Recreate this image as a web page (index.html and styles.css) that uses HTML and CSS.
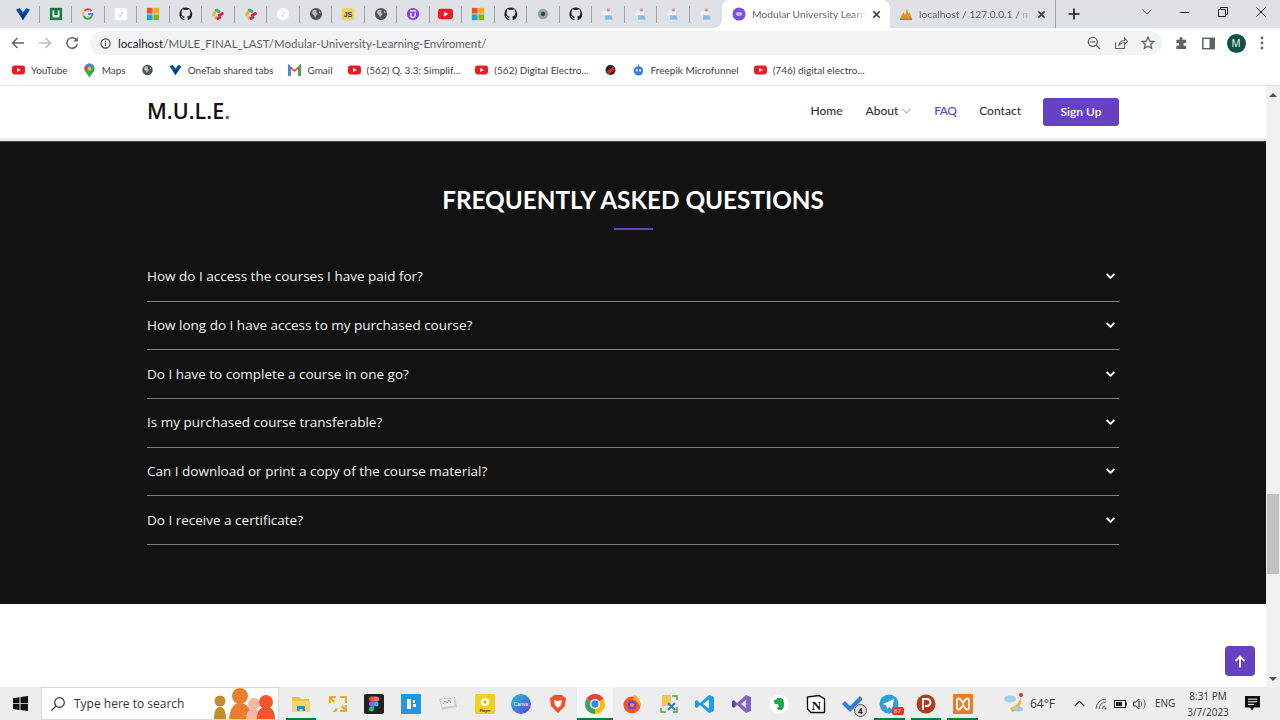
FILE: index.html
```html
<!DOCTYPE html>
<html lang="en">
<head>
<meta charset="utf-8">
<title>Modular University Learning Enviroment</title>
<link rel="stylesheet" href="styles.css">
</head>
<body>
<svg class="defs" width="0" height="0" aria-hidden="true">
  <symbol id="i-onetab" viewBox="0 0 16 16"><path d="M0 3 4 1l4 5 4-5 4 2-8 12z" fill="#0f4fa8"/><path d="M5 6l3 3 3-3-3 9z" fill="#0a2f73"/></symbol>
  <symbol id="i-ms" viewBox="0 0 16 16"><rect x="1" y="1" width="6.5" height="6.5" fill="#f25022"/><rect x="8.5" y="1" width="6.5" height="6.5" fill="#f2a81d"/><rect x="1" y="8.5" width="6.5" height="6.5" fill="#1fa3e0"/><rect x="8.5" y="8.5" width="6.5" height="6.5" fill="#7fba00"/></symbol>
  <symbol id="i-gh" viewBox="0 0 16 16"><path fill="#1b1f23" d="M8 .6a7.500 7.500 0 0 0-2.400 14.600c.4.100.5-.2.5-.4v-1.300c-2.100.4-2.600-.9-2.800-1.400-.1-.2-.5-.9-.8-1.100-.3-.2-.7-.5 0-.6.700 0 1.100.6 1.300.9.700 1.200 2 .9 2.300.7.100-.5.3-.9.5-1.100-1.800-.2-3.800-.9-3.800-4 0-.9.3-1.600.8-2.200-.1-.2-.3-1 .1-2.100 0 0 .7-.2 2.200.8a7.400 7.400 0 0 1 4 0c1.500-1 2.200-.8 2.200-.8.400 1.100.2 1.900.1 2.100.5.600.8 1.300.8 2.200 0 3.100-1.900 3.800-3.700 4 .3.300.6.800.6 1.500v2.200c0 .2.100.5.500.4A7.500 7.500 0 0 0 8 .6z"/></symbol>
  <symbol id="i-slack" viewBox="0 0 16 16"><g stroke-width="3.400" stroke-linecap="round" fill="none"><path d="M6 3.500 9 5" stroke="#2fb67c"/><path d="M3 9 4.500 6" stroke="#ecb22e"/><path d="M5.500 12.500 6 12" stroke="#ecb22e"/><path d="M9.500 9.500 13 7.500" stroke="#e01e5a"/><path d="M8 13 10 12" stroke="#e01e5a"/></g></symbol>
  <symbol id="i-globe" viewBox="0 0 16 16"><circle cx="8" cy="8" r="7" fill="#50555a"/><path d="M4 4l3-1 2 1-1 2 2 1.500-1.500 2L7 12 5.500 9 3.500 7.500zM11.500 4l2 2.500-2 .5z" fill="#b8bbbf"/></symbol>
  <symbol id="i-yt" viewBox="0 0 16 12"><rect x="0" y="0.500" width="16" height="11" rx="3" fill="#ed1c24"/><path d="M6.300 3.400v5.200L11 6z" fill="#fff"/></symbol>
  <symbol id="i-flask" viewBox="0 0 16 16"><path d="M1 6c2-2 4-2 5-1l1 3-5 1z" fill="#e8f1f7"/><path d="M6 4h5v3l2.500 7.500h-9L6 7z" fill="#eef5fa"/><path d="M5 9.500h7l1.500 5h-9z" fill="#7fbde8"/><circle cx="8.500" cy="3.500" r="2" fill="#ee8a7c"/></symbol>
  <symbol id="i-x" viewBox="0 0 10 10"><path d="M1.500 1.500l7 7m0-7l-7 7" stroke="#3c4043" stroke-width="1.700" fill="none"/></symbol>
  <symbol id="i-chev" viewBox="0 0 12 8"><path d="M1.800 1.800 6 6l4.200-4.200" fill="none" stroke="#fff" stroke-width="2"/></symbol>
</svg>

<div class="tabstrip">
  <div class="pinned">
    <div class="ptab"><svg class="pi"><use href="#i-onetab"/></svg></div>
    <div class="ptab"><svg class="pi" viewBox="0 0 16 16"><rect x="1" y="1" width="14" height="14" fill="#1e7a46"/><path d="M4 4h2v5h4V4h2v8H4z" fill="#dcefe4"/></svg></div>
    <div class="ptab"><svg class="pi" viewBox="0 0 16 16"><path d="M4 4.500A5 5 0 0 1 12 4.600" fill="none" stroke="#ea4335" stroke-width="2.400"/><path d="M3.200 10.500A5 5 0 0 1 3.200 5.500" fill="none" stroke="#fbbc05" stroke-width="2.400"/><path d="M3.200 10.500A5 5 0 0 0 12 11" fill="none" stroke="#34a853" stroke-width="2.400"/><path d="M8 8h5.500M13 8c0 1-.4 2-1 3" fill="none" stroke="#4285f4" stroke-width="2.200"/></svg></div>
    <div class="ptab"><svg class="pi" viewBox="0 0 16 16"><rect x="1" y="1" width="14" height="14" rx="2" fill="#fff"/><circle cx="9" cy="7" r="1" fill="#8fb8c9"/><circle cx="7" cy="10" r="1" fill="#8fb8c9"/></svg></div>
    <div class="ptab"><svg class="pi"><use href="#i-ms"/></svg></div>
    <div class="ptab"><svg class="pi"><use href="#i-gh"/></svg></div>
    <div class="ptab"><svg class="pi"><use href="#i-slack"/></svg></div>
    <div class="ptab"><svg class="pi"><use href="#i-slack"/></svg></div>
    <div class="ptab"><svg class="pi" viewBox="0 0 16 16"><circle cx="8" cy="8" r="7" fill="#fff"/><circle cx="9" cy="7" r="1" fill="#a9c4d4"/><circle cx="7" cy="10" r="1" fill="#a9c4d4"/></svg></div>
    <div class="ptab"><svg class="pi"><use href="#i-globe"/></svg></div>
    <div class="ptab"><svg class="pi" viewBox="0 0 16 16"><rect x="1" y="1" width="14" height="14" rx="2" fill="#f0d74e"/><text x="8" y="11.500" class="js">JS</text></svg></div>
    <div class="ptab"><svg class="pi"><use href="#i-globe"/></svg></div>
    <div class="ptab"><svg class="pi" viewBox="0 0 16 16"><circle cx="8" cy="8" r="7" fill="#8a3fd6"/><path d="M5.500 6.500v3a2.500 2.500 0 0 0 5 0v-3M4.500 4.500h7" fill="none" stroke="#fff" stroke-width="1.500"/></svg></div>
    <div class="ptab"><svg class="pi wide"><use href="#i-yt"/></svg></div>
    <div class="ptab"><svg class="pi"><use href="#i-ms"/></svg></div>
    <div class="ptab"><svg class="pi"><use href="#i-gh"/></svg></div>
    <div class="ptab"><svg class="pi" viewBox="0 0 16 16"><circle cx="8" cy="8" r="6" fill="#9aa69b"/><circle cx="8" cy="8" r="2.500" fill="#1d5b38"/></svg></div>
    <div class="ptab"><svg class="pi"><use href="#i-gh"/></svg></div>
    <div class="ptab"><svg class="pi"><use href="#i-flask"/></svg></div>
    <div class="ptab"><svg class="pi"><use href="#i-flask"/></svg></div>
    <div class="ptab"><svg class="pi"><use href="#i-flask"/></svg></div>
    <div class="ptab last"><svg class="pi"><use href="#i-flask"/></svg></div>
  </div>
  <div class="tab active">
    <svg class="pi" viewBox="0 0 16 16"><circle cx="8" cy="8" r="7.500" fill="#7a4fe0"/><path d="M4 8c1-3 7-3 8 0-1 3-7 3-8 0z" fill="#c8b4f5"/></svg>
    <span class="tabtitle">Modular University Learni</span>
    <svg class="tabx"><use href="#i-x"/></svg>
  </div>
  <div class="tab second">
    <svg class="pi" viewBox="0 0 16 16"><path d="M1 14 5 6l2 3 2-7 2 6 1-2 3 8z" fill="#f29111"/><path d="M1 14h14" stroke="#6c78af" stroke-width="1.500"/></svg>
    <span class="tabtitle">localhost / 127.0.0.1 / mu</span>
    <svg class="tabx"><use href="#i-x"/></svg>
  </div>
  <div class="newtab">
    <svg width="12" height="12" viewBox="0 0 12 12"><path d="M6 .5v11M.5 6h11" stroke="#202124" stroke-width="1.700"/></svg>
  </div>
  <div class="winctl">
    <svg width="10" height="6" viewBox="0 0 10 6"><path d="M.5.500 5 5 9.500.500" fill="none" stroke="#555" /></svg>
    <svg class="wbtn" width="10" height="10" viewBox="0 0 10 10"><path d="M0 5.500h9" stroke="#222"/></svg>
    <svg class="wbtn" width="10" height="10" viewBox="0 0 10 10"><path d="M.5 2.500h7v7h-7zM2.500 2.500v-2h7v7h-2" fill="none" stroke="#222"/></svg>
    <svg class="wbtn" width="10" height="10" viewBox="0 0 10 10"><path d="M.5.500l9 9m0-9l-9 9" stroke="#222"/></svg>
  </div>
</div>

<div class="toolbar">
  <svg class="nav-ic" width="14" height="12" viewBox="0 0 14 12"><path d="M13 6H2M6.500 1 1.500 6l5 5" fill="none" stroke="#5f6368" stroke-width="1.500"/></svg>
  <svg class="nav-ic" width="14" height="12" viewBox="0 0 14 12"><path d="M1 6h11M7.500 1l5 5-5 5" fill="none" stroke="#b9bcc0" stroke-width="1.500"/></svg>
  <svg class="nav-ic" width="14" height="14" viewBox="0 0 14 14"><path d="M11.800 4.500A5.300 5.300 0 1 0 12.300 8" fill="none" stroke="#5f6368" stroke-width="1.500"/><path d="M12.800 1v4.500H8.300z" fill="#5f6368"/></svg>
  <div class="omnibox">
    <svg width="11" height="11" viewBox="0 0 12 12"><circle cx="6" cy="6" r="5" fill="none" stroke="#444" stroke-width="1.200"/><path d="M6 5.200v3.600M6 3v1.200" stroke="#444" stroke-width="1.200"/></svg>
    <span class="url"><b>localhost</b>/MULE_FINAL_LAST/Modular-University-Learning-Enviroment/</span>
    <span class="omni-right">
      <svg width="14" height="14" viewBox="0 0 14 14"><circle cx="5.800" cy="5.800" r="4.500" fill="none" stroke="#5f6368" stroke-width="1.300"/><path d="M9 9l4 4M3.500 5.800h4.600" stroke="#5f6368" stroke-width="1.300"/></svg>
      <svg width="14" height="14" viewBox="0 0 14 14"><path d="M1.500 6.500v6h9v-3M5 9c.5-3 2.500-4.500 5.500-4.500V2l3 3.500-3 3V6.500C8 6.500 6.500 7.500 5 9z" fill="none" stroke="#5f6368" stroke-width="1.100"/></svg>
      <svg width="14" height="14" viewBox="0 0 14 14"><path d="M7 1.300 8.700 5.100l4.100.4-3.100 2.700.9 4.100L7 10.200l-3.600 2.100.9-4.100L1.200 5.500l4.100-.4z" fill="none" stroke="#5f6368" stroke-width="1.300"/></svg>
    </span>
  </div>
  <div class="tool-right">
    <svg width="13" height="13" viewBox="0 0 14 14"><path d="M5 1.500a1.500 1.500 0 0 1 3 0V3h4v3.500h-1.500a1.500 1.500 0 0 0 0 3H12V13H1.500V9.500H3a1.500 1.500 0 0 0 0-3H1.500V3H5z" fill="#5f6368"/></svg>
    <svg width="13" height="13" viewBox="0 0 13 13"><rect x=".8" y="1.300" width="11.400" height="10.400" fill="none" stroke="#5f6368" stroke-width="1.500"/><rect x="7.500" y="1.300" width="4.700" height="10.400" fill="#5f6368"/></svg>
    <span class="avatar">M</span>
    <svg width="4" height="14" viewBox="0 0 4 14"><circle cx="2" cy="2" r="1.400" fill="#5f6368"/><circle cx="2" cy="7" r="1.400" fill="#5f6368"/><circle cx="2" cy="12" r="1.400" fill="#5f6368"/></svg>
  </div>
</div>

<div class="bookmarks">
  <div class="bm"><svg class="bi"><use href="#i-yt"/></svg><span>YouTube</span></div>
  <div class="bm"><svg class="bi maps" viewBox="0 0 12 16"><path d="M6 .5a5.500 5.500 0 0 1 5.500 5.500c0 3-3 5-5.500 9.500C3.500 11 .5 9 .5 6A5.500 5.500 0 0 1 6 .5z" fill="#34a853"/><path d="M2 2.500 6 6 .7 7C.3 5 .8 3.500 2 2.500z" fill="#ea4335"/><path d="M6 .5c2 0 3.500 1 4.500 2.500L6 6 2 2.500C3 1.200 4.500.5 6 .5z" fill="#4285f4"/><circle cx="6" cy="6" r="2" fill="#fbbc05"/></svg><span>Maps</span></div>
  <div class="bm"><svg class="bi"><use href="#i-globe"/></svg></div>
  <div class="bm"><svg class="bi"><use href="#i-onetab"/></svg><span>OneTab shared tabs</span></div>
  <div class="bm"><svg class="bi" viewBox="1 2 12 9" preserveAspectRatio="none"><path d="M1 11V2l6 4.500L13 2v9h-2.500V5.500L7 8 3.500 5.500V11z" fill="#ea4335"/><path d="M1 11V2l2.500 2v7z" fill="#4285f4"/><path d="M13 11V2l-2.500 2v7z" fill="#34a853"/></svg><span>Gmail</span></div>
  <div class="bm"><svg class="bi"><use href="#i-yt"/></svg><span>(562) Q. 3.3: Simplif...</span></div>
  <div class="bm"><svg class="bi"><use href="#i-yt"/></svg><span>(562) Digital Electro...</span></div>
  <div class="bm"><svg class="bi" viewBox="0 0 12 12"><circle cx="6" cy="6" r="5" fill="#222"/><path d="M2.500 8 9.500 3.500M3.500 9.500 10 5.500" stroke="#e3262e" stroke-width="1.600"/></svg></div>
  <div class="bm"><svg class="bi" viewBox="0 0 14 14"><circle cx="7" cy="8" r="5.500" fill="#2f7fe0"/><circle cx="5" cy="7.500" r="1.300" fill="#fff"/><circle cx="9" cy="7.500" r="1.300" fill="#fff"/><path d="M7 3V.5" stroke="#2f7fe0" stroke-width="1.500"/></svg><span>Freepik Microfunnel</span></div>
  <div class="bm"><svg class="bi"><use href="#i-yt"/></svg><span>(746) digital electro...</span></div>
</div>

<div class="viewport">
  <main class="page">
    <header class="site-header">
      <div class="container header-row">
        <a class="logo">M.U.L.E<span class="dot">.</span></a>
        <nav class="site-nav">
          <a class="lnk">Home</a>
          <a class="lnk has-drop">About <svg width="9" height="6" viewBox="0 0 9 6"><path d="M.5 1 4.500 5 8.500 1" fill="none" stroke="#8a8a8a"/></svg></a>
          <a class="lnk current">FAQ</a>
          <a class="lnk">Contact</a>
          <a class="signup">Sign Up</a>
        </nav>
      </div>
    </header>
    <section class="faq">
      <div class="container">
        <h2 class="faq-title">FREQUENTLY ASKED QUESTIONS</h2>
        <div class="faq-rule"></div>
        <ul class="faq-list">
          <li>How do I access the courses I have paid for?<svg class="faq-chev"><use href="#i-chev"/></svg></li>
          <li>How long do I have access to my purchased course?<svg class="faq-chev"><use href="#i-chev"/></svg></li>
          <li>Do I have to complete a course in one go?<svg class="faq-chev"><use href="#i-chev"/></svg></li>
          <li>Is my purchased course transferable?<svg class="faq-chev"><use href="#i-chev"/></svg></li>
          <li>Can I download or print a copy of the course material?<svg class="faq-chev"><use href="#i-chev"/></svg></li>
          <li>Do I receive a certificate?<svg class="faq-chev"><use href="#i-chev"/></svg></li>
        </ul>
      </div>
    </section>
    <a class="to-top"><svg width="12" height="13" viewBox="0 0 12 13"><path d="M6 12.500V2M1.500 6 6 1.500 10.500 6" fill="none" stroke="#fff" stroke-width="1.800"/></svg></a>
  </main>
  <div class="scrollbar">
    <svg width="8" height="4" viewBox="0 0 8 4"><path d="M4 0l4 4H0z" fill="#505050"/></svg>
    <div class="thumb"></div>
    <svg width="8" height="4" viewBox="0 0 8 4"><path d="M0 0h8L4 4z" fill="#505050"/></svg>
  </div>
</div>

<footer class="taskbar">
  <svg class="start" width="15" height="15" viewBox="0 0 15 15"><path d="M0 2.200 6.500 1.200v6H0zM7.500 1 15 0v7.200H7.500zM0 8h6.500v6L0 13zM7.500 8H15v7l-7.500-1z" fill="#111"/></svg>
  <div class="searchbox">
    <svg width="16" height="16" viewBox="0 0 16 16"><circle cx="9.500" cy="6.500" r="4.800" fill="none" stroke="#333" stroke-width="1.200"/><path d="M6 10l-4.500 4.500" stroke="#333" stroke-width="1.300"/></svg>
    <span>Type here to search</span>
    <svg class="people" width="66" height="32" viewBox="0 0 66 32"><circle cx="8" cy="14" r="5.500" fill="#c48a2e"/><path d="M2 32c0-8 2-12 6-12s6 4 6 12z" fill="#c48a2e"/><circle cx="28" cy="9" r="8" fill="#e97f2e"/><path d="M17 32c1-10 4-16 11-16s11 6 13 16z" fill="#e97f2e"/><circle cx="42" cy="17" r="6" fill="#f4b8a4"/><path d="M34 32c0-6 3-10 8-10s8 4 8 10z" fill="#f4b8a4"/><circle cx="54" cy="15" r="7" fill="#f0562a"/><path d="M45 32c0-8 3-12 9-12s9 4 9 12z" fill="#f0562a"/></svg>
  </div>
  <div class="apps">
    <div class="app on"><svg class="ai" viewBox="0 0 20 20"><path d="M1 3h7l2 2h8v3H1z" fill="#f0c040"/><rect x="1" y="7" width="18" height="11" fill="#f6d56b"/><path d="M6 17v-5h8v5h-2.500v-2h-3v2z" fill="#2f86c9"/></svg></div>
    <div class="app"><svg class="ai" viewBox="0 0 20 20"><path d="M1 2h7v2H4l3 3-1.500 2L3 6v3H1zM19 18h-7v-2h4l-3-3 1.500-2L17 14v-3h2zM12 2h7v7h-2V4h-5zM8 18H5l3-4 2 1z" fill="#e8ac1c"/></svg></div>
    <div class="app"><svg class="ai" viewBox="0 0 20 20"><rect width="20" height="20" rx="2" fill="#222"/><circle cx="12" cy="10" r="2.500" fill="#1abcfe"/><path d="M7.500 2.500H10v5H7.500a2.500 2.500 0 0 1 0-5z" fill="#f24e1e"/><path d="M10 2.500h2.500a2.500 2.500 0 0 1 0 5H10z" fill="#ff7262"/><path d="M7.500 7.500H10v5H7.500a2.500 2.500 0 0 1 0-5z" fill="#a259ff"/><path d="M7.500 12.500H10V15a2.500 2.500 0 1 1-2.500-2.500z" fill="#0acf83"/></svg></div>
    <div class="app"><svg class="ai" viewBox="0 0 20 20"><rect width="20" height="20" rx="1" fill="#1d9be0"/><path d="M6 5h4v10H6zM12 6h2v3h-2zM12 10h3v3h-3z" fill="#fff"/></svg></div>
    <div class="app"><svg class="ai" viewBox="0 0 20 20"><path d="M1 5 17 3l2 10-15 3z" fill="#c9ced2"/><path d="M3 6l13-1.500.5 7L4 13z" fill="#eef1f3"/><path d="M5 10l2-3 2 2 2-3 2 3" fill="none" stroke="#7ea5c5" stroke-width="1"/></svg></div>
    <div class="app"><svg class="ai" viewBox="0 0 20 20"><rect width="20" height="20" rx="2" fill="#f5cf1f"/><circle cx="10" cy="8" r="4" fill="#fff"/><circle cx="10" cy="8" r="1.500" fill="#c9a60e"/><text x="10" y="17.500" class="mini">Player</text></svg></div>
    <div class="app"><svg class="ai" viewBox="0 0 20 20"><defs><linearGradient id="cv" x1="0" y1="0" x2="1" y2="1"><stop offset="0" stop-color="#19c4cc"/><stop offset="1" stop-color="#6a3fd8"/></linearGradient></defs><circle cx="10" cy="10" r="10" fill="url(#cv)"/><text x="10" y="12" class="mini2">Canva</text></svg></div>
    <div class="app"><svg class="ai" viewBox="0 0 20 20"><path d="M6 1h8l2 2 2 1-1 8-7 7-7-7-1-8 2-1z" fill="#f0512a"/><path d="M6 6l4 1 4-1-1 5-3 3-3-3z" fill="#fff"/></svg></div>
    <div class="app cur"><svg class="ai" viewBox="0 0 20 20"><path d="M10 10 1.340 5A10 10 0 0 1 18.660 5z" fill="#ea4335"/><path d="M10 10 18.660 5A10 10 0 0 1 10 20z" fill="#fbbc05"/><path d="M10 10 10 20A10 10 0 0 1 1.340 5z" fill="#34a853"/><circle cx="10" cy="10" r="4.400" fill="#4285f4" stroke="#fff" stroke-width="1.400"/></svg></div>
    <div class="app"><svg class="ai" viewBox="0 0 20 20"><circle cx="10" cy="11" r="8.500" fill="#f0582c"/><circle cx="10" cy="11" r="4.500" fill="#7d3fd0"/><path d="M12 1c5 2 7 6 6 11-2-4-4-6-7-6z" fill="#fbb02c"/><circle cx="10" cy="11" r="2" fill="#f59a2d"/></svg></div>
    <div class="app"><svg class="ai" viewBox="0 0 20 20"><rect x="3" y="1" width="9" height="11" fill="#f2c94c"/><path d="M13 2h5v4M2 14v4h5M18 13v5h-4" fill="none" stroke="#4ca64c" stroke-width="1.500"/><path d="M9 9l7 7m0-7-7 7" stroke="#2f80c9" stroke-width="2"/></svg></div>
    <div class="app"><svg class="ai" viewBox="0 0 20 20"><path d="M14 1 19 3v14l-5 2L5 11l-3 3-2-1v-6l2-1 3 3z" fill="#1f9cf0"/><path d="M14 5.500 8 10l6 4.500z" fill="#fff"/></svg></div>
    <div class="app"><svg class="ai" viewBox="0 0 20 20"><path d="M14 1 19 3v14l-5 2L5 11l-3 3-2-1V7l2-1 3 3z" fill="#8661c5"/><path d="M14 6 9 10l5 4z" fill="#efe8fb"/><path d="M0 7h3v6H0z" fill="#5d4296"/></svg></div>
    <div class="app"><svg class="ai" viewBox="0 0 20 20"><circle cx="10" cy="10" r="9.500" fill="#fff"/><path d="M5 6h2l1-2h4c2 0 3 3 3 6 0 4-1 6-4 6-2 0-3-1-3-2s2-1 2-1l-1-3H6c-1-1-1-3-1-4z" fill="#1fa84a"/></svg></div>
    <div class="app"><svg class="ai" viewBox="0 0 20 20"><path d="M1.500 3 13 1.500 18.500 5v13.500H5L1.500 15z" fill="#fff" stroke="#111" stroke-width="1.400"/><text x="10.500" y="15.500" class="notion">N</text></svg></div>
    <div class="app badge-host"><svg class="ai" viewBox="0 0 20 20"><path d="M0 10l3-3 5 5L18 2l3 3-13 13z" fill="#2f7fd6"/></svg><span class="count">4</span></div>
    <div class="app on badge-host"><svg class="ai" viewBox="0 0 20 20"><circle cx="10" cy="10" r="9.500" fill="#2aa1da"/><path d="M4 10l11-5-2 10-3-2-2 2-.5-3.500z" fill="#fff"/></svg><span class="tg">67</span></div>
    <div class="app on"><svg class="ai" viewBox="0 0 20 20"><circle cx="10" cy="10" r="9.500" fill="#b33a1e"/><path d="M7 16V5h4a3 3 0 0 1 0 7H9" fill="none" stroke="#fff" stroke-width="2"/></svg></div>
    <div class="app on"><svg class="ai" viewBox="0 0 20 20"><rect width="20" height="20" rx="1" fill="#f07a22"/><path d="M4 6c0-2 3-2 4 0l2 3 2-3c1-2 4-2 4 0v8c0 2-3 2-4 0l-2-3-2 3c-1 2-4 2-4 0z" fill="none" stroke="#fff" stroke-width="1.800"/></svg></div>
  </div>
  <div class="tray">
    <svg class="weather" width="22" height="22" viewBox="0 0 22 22"><ellipse cx="7" cy="7" rx="6" ry="3.500" fill="#a5cfe8"/><path d="M9 20C16 19 19 13 18 5c-2 6-5 9-11 11z" fill="#f2b632"/><circle cx="18" cy="3" r="2" fill="#d8322a"/><ellipse cx="15" cy="17" rx="5" ry="2.500" fill="#9fcbe6"/></svg>
    <span class="temp">64°F</span>
    <svg class="t-caret" width="11" height="7" viewBox="0 0 11 7"><path d="M.8 6 5.500 1.200 10.200 6" fill="none" stroke="#222" stroke-width="1.100"/></svg>
    <svg class="t-wifi" width="12" height="12" viewBox="0 0 12 12"><path d="M1 11A10 10 0 0 1 11 1M4 11a7 7 0 0 1 7-7M7 11a4 4 0 0 1 3-3" fill="none" stroke="#555"/><circle cx="10.500" cy="10.500" r="1" fill="#222"/></svg>
    <svg class="t-bat" width="13" height="8" viewBox="0 0 13 8"><rect x=".5" y=".5" width="11" height="7" fill="none" stroke="#222"/><rect x="2" y="2" width="6" height="4" fill="#222"/><rect x="12" y="2.500" width="1" height="3" fill="#222"/></svg>
    <svg class="t-snd" width="14" height="12" viewBox="0 0 14 12"><path d="M.5 4h2L6 1v10L2.500 8h-2z" fill="none" stroke="#222"/><path d="M8 3.500c1 1.500 1 3.500 0 5M10.500 1.500c2 2.500 2 6.500 0 9" fill="none" stroke="#555"/></svg>
    <span class="lang">ENG</span>
    <div class="clock"><span>8:31 PM</span><span>3/7/2023</span></div>
    <svg class="t-note" width="15" height="15" viewBox="0 0 15 15"><path d="M0 0h15v11.500H9L7 14.500 5 11.500H0z" fill="#111"/><path d="M3 3.200h9M3 5.800h9M3 8.400h6" stroke="#fff"/></svg>
  </div>
</footer>
</body>
</html>
```

FILE: styles.css
```css
* { box-sizing: border-box; }
html, body { margin: 0; padding: 0; }
body {
  width: 1280px;
  height: 720px;
  overflow: hidden;
  display: flex;
  flex-direction: column;
  font-family: "Open Sans", sans-serif;
  background: #fff;
}
.defs { position: absolute; }
a { text-decoration: none; color: inherit; }

/* tab strip */
.tabstrip {
  height: 28px;
  flex: none;
  display: flex;
  align-items: stretch;
  background: #dee1e6;
  padding-left: 7px;
  position: relative;
}
.pinned { display: flex; width: 715px; flex: none; }
.ptab {
  width: 32.5px;
  display: flex;
  align-items: center;
  justify-content: center;
  position: relative;
}
.ptab::after {
  content: "";
  position: absolute;
  right: 0;
  top: 6px;
  height: 17px;
  width: 1px;
  background: #a0a3a8;
}
.ptab.last::after { display: none; }
.pi { width: 14px; height: 14px; flex: none; }
.pi.wide { width: 15px; height: 12px; }
.js { font: 700 8px "Liberation Sans", sans-serif; text-anchor: middle; fill: #333; }
.tab {
  width: 168px;
  flex: none;
  display: flex;
  align-items: center;
  padding: 0 9px 0 10px;
  gap: 6px;
  color: #5f6368;
  white-space: nowrap;
  position: relative;
}
.tab.second {
  width: 166px;
  padding-left: 9px;
  border-right: 1px solid #9da1a6;
  background-clip: padding-box;
}
.tab.active {
  background: #fff;
  border-radius: 8px 8px 0 0;
}
.tab.active::before {
  content: "";
  position: absolute;
  left: -8px;
  bottom: 0;
  width: 8px;
  height: 8px;
  background: radial-gradient(circle at 0 0, transparent 7.500px, #fff 8px);
}
.tabtitle {
  flex: 1;
  min-width: 0;
  font-family: Lato, sans-serif;
  font-size: 10.3px;
  -webkit-mask-image: linear-gradient(90deg, #000 88%, transparent);
  mask-image: linear-gradient(90deg, #000 88%, transparent);
}
.tabx { width: 9px; height: 9px; flex: none; }
.newtab { width: 36px; flex: none; display: flex; align-items: center; justify-content: center; }
.winctl {
  margin-left: auto;
  display: flex;
  align-items: center;
  padding-right: 14px;
  padding-bottom: 4px;
}
.wbtn { margin-left: 28px; }

/* toolbar */
.toolbar {
  height: 30px;
  flex: none;
  display: flex;
  align-items: center;
  padding: 0 0 0 11px;
  background: #fff;
}
.nav-ic { margin-right: 13px; flex: none; }
.nav-ic + .nav-ic + .nav-ic { margin-right: 11px; }
.omnibox {
  width: 1072px;
  height: 24px;
  flex: none;
  border-radius: 12px;
  background: #f1f3f4;
  display: flex;
  align-items: center;
  padding: 0 7px 0 10px;
  gap: 7px;
  font-family: Lato, sans-serif;
  font-size: 11.5px;
  color: #5f6368;
}
.url { white-space: nowrap; }
.url b { font-weight: 400; color: #202124; }
.omni-right { margin-left: auto; display: flex; gap: 13px; align-items: center; }
.tool-right { display: flex; align-items: center; margin-left: 13px; gap: 14px; }
.avatar {
  width: 19px;
  height: 19px;
  margin-left: -2.500px;
  border-radius: 50%;
  background: #0b5345;
  color: #fff;
  font-size: 10px;
  display: flex;
  align-items: center;
  justify-content: center;
}

/* bookmarks */
.bookmarks {
  height: 28px;
  flex: none;
  display: flex;
  align-items: center;
  gap: 15px;
  padding: 0 0 3px 12px;
  font-family: Lato, sans-serif;
  font-size: 10px;
  color: #3c4043;
  border-bottom: 1px solid #e4e4e4;
  white-space: nowrap;
}
.bm { display: flex; align-items: center; gap: 6px; }
.bi { width: 13px; height: 12px; flex: none; }
.bi.maps { height: 15px; }

/* page */
.viewport {
  flex: 1;
  min-height: 0;
  display: flex;
  position: relative;
}
.page { flex: 1; min-width: 0; background: #fff; }
.container { width: 972px; margin: 0 auto; }
.site-header {
  height: 55px;
  background: #fff;
  border-bottom: 3px solid #ececec;
}
.header-row { display: flex; align-items: center; justify-content: space-between; height: 100%; }
.logo {
  font-weight: 600;
  font-size: 21.5px;
  color: #111;
  padding-bottom: 3px;
}
.logo .dot { color: #6741c4; }
.site-nav {
  display: flex;
  align-items: center;
  gap: 23px;
  font-family: Lato, sans-serif;
  font-size: 12px;
  font-weight: 500;
  color: #333;
}
.lnk { padding-bottom: 3px; }
.has-drop { display: flex; align-items: center; gap: 4px; }
.current { color: #6741c4; letter-spacing: -.6px; }
.signup {
  width: 76px;
  height: 28px;
  margin-left: -1px;
  padding-bottom: 2px;
  background: #6741c4;
  color: #fff;
  border-radius: 3px;
  display: flex;
  align-items: center;
  justify-content: center;
  font-weight: 600;
  font-size: 12px;
}
.faq {
  height: 463px;
  background: #121212;
  border-top: 1px solid #444;
  padding-top: 43px;
  color: #fff;
}
.faq-title {
  margin: 0;
  text-align: center;
  font-family: Lato, sans-serif;
  font-weight: 700;
  font-size: 24.3px;
  line-height: 30px;
}
.faq-rule { width: 39px; height: 2px; background: #6741c4; margin: 13px auto 0; }
.faq-list { list-style: none; margin: 23px 0 0; padding: 0; }
.faq-list li {
  height: 48.67px;
  display: flex;
  align-items: center;
  justify-content: space-between;
  font-size: 13.5px;
  font-weight: 500;
  color: #f4f4f4;
  border-bottom: 1px solid #7d7d7d;
  padding: 0 3px 1px 0;
}
.faq-chev { width: 11px; height: 8px; }
.to-top {
  position: absolute;
  left: 1225px;
  top: 560px;
  width: 30px;
  height: 30px;
  background: #6741c4;
  border-radius: 4px;
  display: flex;
  align-items: center;
  justify-content: center;
}
.scrollbar {
  width: 14px;
  flex: none;
  background: #f1f1f1;
  display: flex;
  flex-direction: column;
  align-items: center;
  padding: 7px 0 6px;
  position: relative;
}
.thumb {
  position: absolute;
  left: 1px;
  right: 1px;
  top: 408px;
  height: 80px;
  background: #c1c1c1;
}
.scrollbar svg:last-child { margin-top: auto; }

/* taskbar */
.taskbar {
  height: 33px;
  flex: none;
  display: flex;
  align-items: center;
  background: #ededed;
  position: relative;
}
.start { margin-left: 13px; flex: none; }
.searchbox {
  margin-left: 13px;
  width: 238px;
  height: 33px;
  flex: none;
  background: #fff;
  border: 1px solid #d8d8d8;
  display: flex;
  align-items: center;
  padding-left: 8px;
  gap: 8px;
  font-size: 12px;
  color: #333;
  position: relative;
  overflow: hidden;
}
.people { position: absolute; right: 0; bottom: 0; }
.apps { display: flex; margin-left: 3.500px; height: 100%; }
.app {
  width: 36.78px;
  height: 33px;
  display: flex;
  align-items: center;
  justify-content: center;
  position: relative;
  flex: none;
}
.app.on::after, .app.cur::after {
  content: "";
  position: absolute;
  left: 3px;
  right: 3px;
  bottom: 0;
  height: 2px;
  background: #0f7b3f;
}
.app.cur { background: #f6f6f6; }
.app.cur::after { left: 0; right: 0; }
.ai { width: 20px; height: 20px; }
.mini { font: 700 3.500px "Liberation Sans", sans-serif; text-anchor: middle; fill: #333; }
.mini2 { font: 400 5px "Liberation Sans", sans-serif; text-anchor: middle; fill: #fff; }
.notion { font: 700 13px "Liberation Serif", serif; text-anchor: middle; fill: #111; }
.count {
  position: absolute;
  right: 4px;
  bottom: 3px;
  width: 13px;
  height: 13px;
  border-radius: 50%;
  background: #ddd;
  border: 1px solid #555;
  font-size: 8px;
  font-weight: 700;
  color: #222;
  display: flex;
  align-items: center;
  justify-content: center;
}
.tg {
  position: absolute;
  right: 4px;
  bottom: 5px;
  width: 12px;
  height: 8px;
  background: #e5352b;
  border-radius: 2px;
  font-size: 6px;
  line-height: 8px;
  color: #fff;
  text-align: center;
}
.tray {
  position: absolute;
  left: 0;
  top: 0;
  width: 1280px;
  height: 33px;
  pointer-events: none;
}
.tray > * { position: absolute; }
.weather { left: 1003px; top: 5px; }
.temp { left: 1030px; top: 8px; font-size: 12px; color: #333; }
.t-caret { left: 1074px; top: 13px; }
.t-wifi { left: 1095px; top: 11px; }
.t-bat { left: 1114px; top: 13px; }
.t-snd { left: 1133px; top: 11px; }
.lang { left: 1155px; top: 9px; font-size: 10px; color: #333; }
.clock {
  left: 1180px;
  top: 1px;
  width: 56px;
  display: flex;
  flex-direction: column;
  align-items: center;
  font-size: 10px;
  line-height: 16px;
  color: #333;
}
.t-note { left: 1245px; top: 9px; }
```
